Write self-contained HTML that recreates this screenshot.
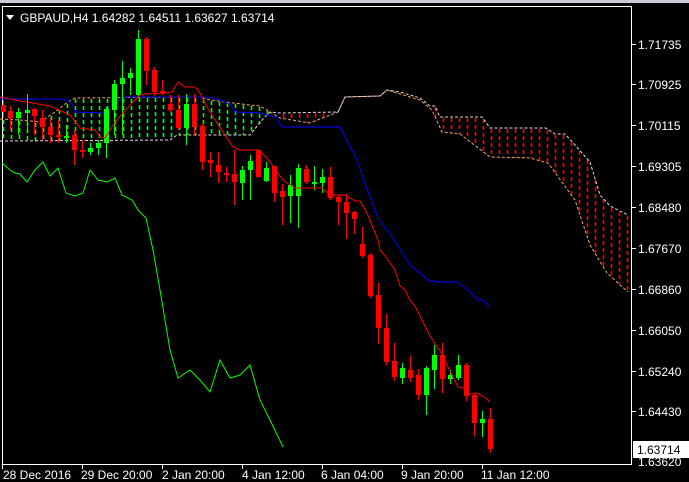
<!DOCTYPE html>
<html><head><meta charset="utf-8"><style>
html,body{margin:0;padding:0;background:#000;width:689px;height:482px;overflow:hidden}
svg{display:block}
text{font-family:"Liberation Sans",sans-serif;font-size:12px;fill:#fff}
</style></head><body>
<svg id="s" width="689" height="482" xmlns="http://www.w3.org/2000/svg">
<rect x="0" y="0" width="689" height="482" fill="#000"/>
<rect x="0" y="0" width="689" height="3" fill="#c8ccd4"/>
<rect x="2.5" y="6.5" width="629" height="458" fill="none" stroke="#fff" stroke-width="1"/>
<g id="hatch"></g>
<polyline id="sa" fill="none" stroke="#f4a460" stroke-dasharray="3,2"/>
<polyline id="sb" fill="none" stroke="#e6d8e6" stroke-dasharray="3,2"/>
<polyline points="2,163 10,170 15,173 20,174 27,182 35,170 43,162 50,176 58,168 66,193 75,196 83,193 90,170 98,180 107,182 115,178 122,195 132,200 138,210 146,218 153,250 160,290 170,350 178,378 190,370 200,380 210,392 220,360 230,378 240,375 250,365 260,400 270,420 283,447" fill="none" stroke="#00ff00"/>
<polyline points="0,99 55,99 67,100 72,104 75,112 106,113 110,107 125,97 200,97 215,98 230,104 235,112 260,113 276,117 282,127 340,127 357,160 363,178 378,218 393,238 410,265 428,280 440,282 458,282 470,292 478,300 483,300 490,307" fill="none" stroke="#0000ff"/>
<g id="c" shape-rendering="crispEdges"></g>
<polyline points="0,97 20,101 50,106 70,115 80,128 95,130 100,137 105,138 115,122 130,105 140,95 145,94 165,93 172,92 178,82 185,87 195,87 200,93 207,107 215,120 233,147 240,150 258,150 262,153 270,162 283,180 295,188 322,188 330,195 345,195 355,201 360,201 367,213 378,240 380,250 385,256 395,270 400,286 405,290 410,300 415,306 430,336 440,351 458,387 465,388 470,394 477,393 486,398 490,402" fill="none" stroke="#ff0000"/>
<g fill="#fff">
<rect x="632" y="44" width="4" height="1"/><rect x="632" y="84" width="4" height="1"/><rect x="632" y="125" width="4" height="1"/><rect x="632" y="166" width="4" height="1"/><rect x="632" y="207" width="4" height="1"/><rect x="632" y="248" width="4" height="1"/><rect x="632" y="289" width="4" height="1"/><rect x="632" y="330" width="4" height="1"/><rect x="632" y="371" width="4" height="1"/><rect x="632" y="411" width="4" height="1"/>
</g>
<text x="638" y="49">1.71735</text><text x="638" y="89">1.70925</text><text x="638" y="130">1.70115</text><text x="638" y="171">1.69305</text><text x="638" y="212">1.68480</text><text x="638" y="253">1.67670</text><text x="638" y="294">1.66860</text><text x="638" y="335">1.66050</text><text x="638" y="376">1.65240</text><text x="638" y="416">1.64430</text>
<text x="638" y="466">1.63620</text>
<rect x="633" y="441" width="56" height="17" fill="#fff"/>
<text x="637" y="454" style="fill:#000">1.63714</text>
<g fill="#fff"><rect x="2" y="465" width="1" height="4"/><rect x="82" y="465" width="1" height="4"/><rect x="162" y="465" width="1" height="4"/><rect x="242" y="465" width="1" height="4"/><rect x="322" y="465" width="1" height="4"/><rect x="402" y="465" width="1" height="4"/><rect x="482" y="465" width="1" height="4"/></g>
<text x="3" y="479">28 Dec 2016</text><text x="81" y="479">29 Dec 20:00</text><text x="162" y="479">2 Jan 20:00</text><text x="242" y="479">4 Jan 12:00</text><text x="321" y="479">6 Jan 04:00</text><text x="401" y="479">9 Jan 20:00</text><text x="481" y="479">11 Jan 12:00</text>
<polygon points="6,15 14,15 10,20" fill="#fff"/>
<text x="20" y="22">GBPAUD,H4  1.64282 1.64511 1.63627 1.63714</text>
</svg>
<script>
var A=[[0,119],[20,120],[40,122],[55,112],[65,104],[75,98],[200,97],[210,100],[225,102],[250,105],[260,106],[280,118],[310,123],[320,119],[338,112],[345,97],[380,96],[387,90],[420,100],[432,110],[442,132],[460,134],[490,157],[530,158],[548,163],[575,200],[590,245],[607,273],[628,292]];
var B=[[0,141],[170,140],[177,135],[250,135],[262,120],[270,112],[280,113],[338,112],[345,97],[380,96],[387,90],[400,92],[420,98],[430,106],[435,106],[440,117],[482,117],[490,128],[546,128],[555,134],[565,134],[575,145],[590,162],[600,195],[610,206],[628,215]];
function pts(a){return a.map(function(p){return p.join(',')}).join(' ')}
document.getElementById('sa').setAttribute('points',pts(A));
document.getElementById('sb').setAttribute('points',pts(B));
function iy(a,x){for(var i=0;i<a.length-1;i++){if(x>=a[i][0]&&x<=a[i+1][0]){var t=(x-a[i][0])/((a[i+1][0]-a[i][0])||1);return a[i][1]+t*(a[i+1][1]-a[i][1]);}}return a[a.length-1][1];}
var NS='http://www.w3.org/2000/svg',hg=document.getElementById('hatch');
for(var x=3;x<=627;x+=8){var ya=iy(A,x),yb=iy(B,x);if(Math.abs(ya-yb)<3)continue;
var t=Math.round(Math.min(ya,yb)),b=Math.round(Math.max(ya,yb));
var l=document.createElementNS(NS,'line');
l.setAttribute('x1',x+0.5);l.setAttribute('x2',x+0.5);l.setAttribute('y1',t+1);l.setAttribute('y2',b);
l.setAttribute('style','stroke:'+(ya<yb?'#00ff00':'#ff0000')+';stroke-width:1.6;stroke-dasharray:4,3;fill:none');
hg.appendChild(l);}
var d=[[3,105,112,100,118,0],[10,111,118,106,130,0],[18,118,112,108,135,1],[27,113,110,94,133,1],[34,109,116,108,135,0],[42,118,127,110,140,0],[50,127,135,118,143,0],[58,135,137,120,143,0],[66,137,136,125,143,1],[74,135,150,130,165,0],[82,150,151,140,158,0],[90,152,148,143,155,1],[98,148,143,140,155,1],[106,143,109,107,158,1],[114,110,84,80,135,1],[122,84,78,61,135,1],[130,78,73,68,95,1],[138,95,39,30,98,1],[146,39,71,37,85,0],[154,70,92,67,96,0],[162,91,93,80,95,0],[170,104,110,95,112,0],[178,110,128,95,130,0],[186,128,104,94,145,1],[194,104,127,94,135,0],[202,126,162,124,170,0],[210,160,163,152,177,0],[218,165,172,152,183,0],[226,173,175,167,182,0],[234,174,182,150,205,0],[242,183,170,166,200,1],[250,170,161,155,200,1],[258,150,177,150,177,0],[266,181,168,162,182,1],[274,166,193,166,202,0],[282,191,197,184,225,0],[290,196,185,175,223,1],[298,196,168,164,228,1],[306,169,182,165,184,0],[314,183,182,166,190,1],[322,183,177,169,193,1],[330,177,198,167,200,0],[338,197,202,195,225,0],[346,202,213,194,239,0],[354,212,219,211,234,0],[362,244,256,227,258,0],[370,255,296,253,298,0],[378,295,328,283,344,0],[386,328,362,314,365,0],[394,361,377,343,381,0],[402,378,368,363,384,1],[410,370,378,356,382,0],[418,375,395,369,400,0],[426,395,368,366,415,1],[434,370,355,345,389,1],[442,355,379,343,393,0],[450,379,375,370,384,1],[458,378,365,355,380,1],[466,365,396,363,401,0],[474,395,423,393,436,0],[482,423,419,411,437,1],[490,419,449,408,453,0]];
var g=document.getElementById('c'),h2='';
d.forEach(function(c){var col=c[5]?'#00ff00':'#ff0000';var t=Math.min(c[1],c[2]),b=Math.max(c[1],c[2]);
h2+='<rect x="'+c[0]+'" y="'+c[3]+'" width="1" height="'+(c[4]-c[3])+'" fill="'+col+'"/>';
h2+='<rect x="'+(c[0]-2)+'" y="'+t+'" width="5" height="'+Math.max(b-t,2)+'" fill="'+col+'"/>';});
g.innerHTML=h2;
</script>
</body></html>
